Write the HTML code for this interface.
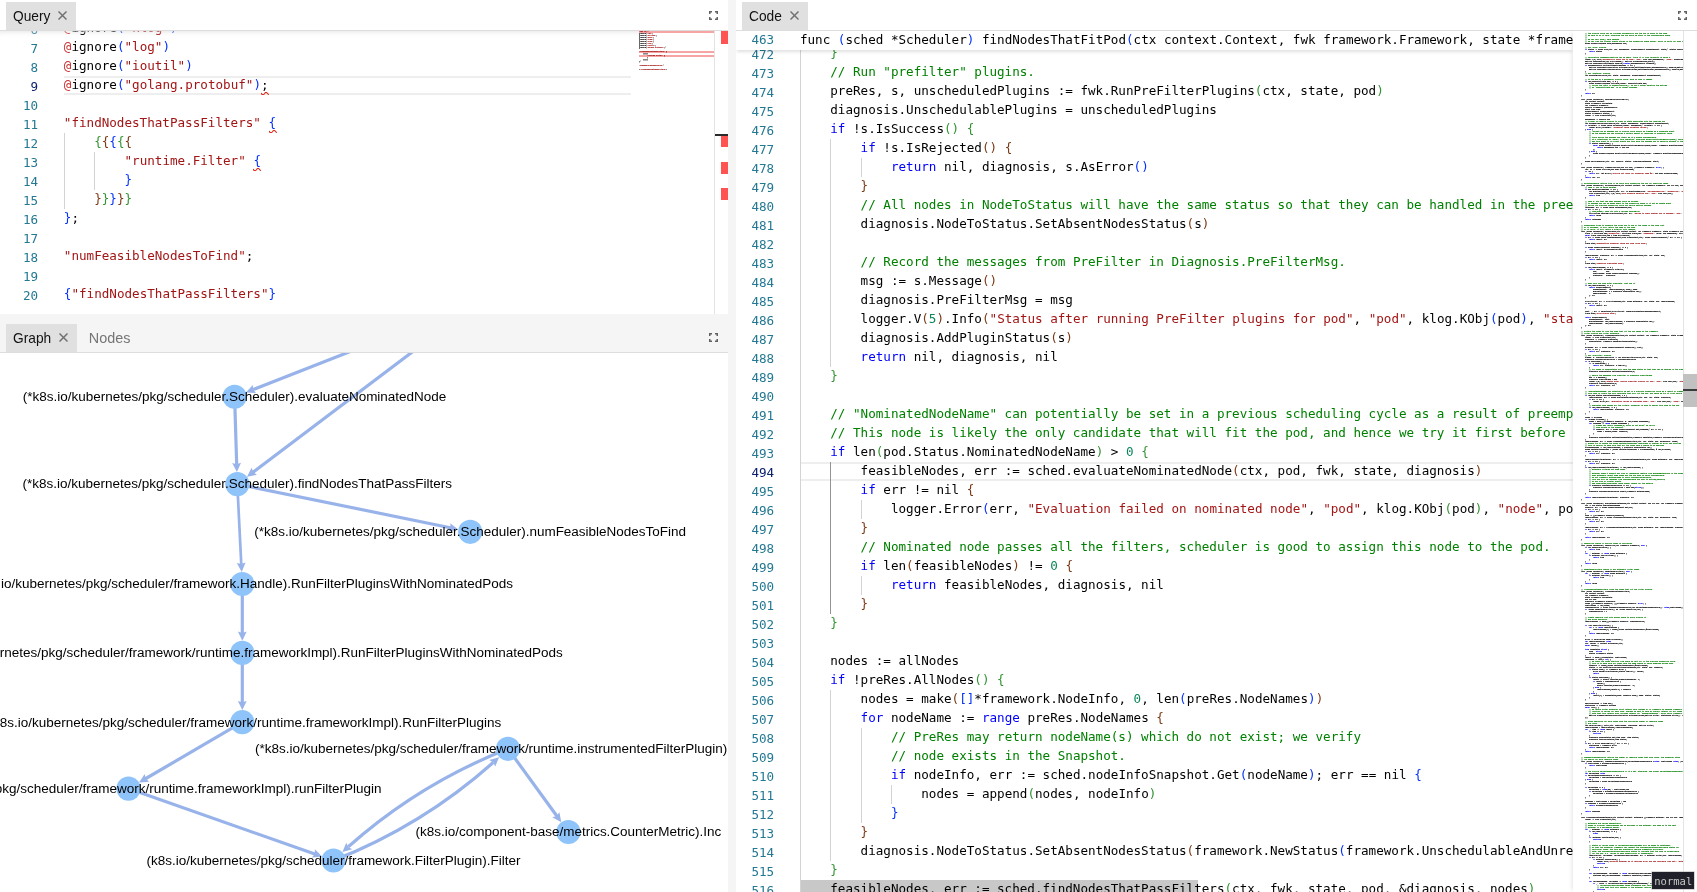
<!DOCTYPE html>
<html lang="en"><head><meta charset="utf-8"><title>Query / Graph / Code</title>
<style>
*{box-sizing:border-box;margin:0;padding:0}
html,body{width:1697px;height:892px;overflow:hidden;background:#f5f5f5;font-family:"Liberation Sans",Arial,sans-serif}
.abs{position:absolute}
#left{will-change:transform;position:absolute;left:0;top:0;width:728px;height:892px;overflow:hidden}
#right{will-change:transform;position:absolute;left:736px;top:0;width:961px;height:892px;overflow:hidden;background:#fff}
.hdr{position:absolute;left:0;top:0;width:100%;height:31px;background:#fff;z-index:5;border-bottom:1px solid #ddd}
.sd{position:absolute;left:0;top:0;width:100%;height:6px;box-shadow:#ddd 0 6px 6px -6px inset;z-index:3}
.tab{position:absolute;top:2px;height:28px;background:#e0e0e0;font-size:14.4px;line-height:26px;padding-top:.5px;color:#111;padding-left:7.3px;white-space:nowrap}
.tab span{display:inline-block;transform:scaleX(.955);transform-origin:0 50%}
.tab.in{background:none;color:#757575}
.ed{position:absolute;background:#fff;overflow:hidden;font-family:"DejaVu Sans Mono","Liberation Mono",monospace;font-size:12.6px;line-height:19px;color:#000}
.ln{position:absolute;left:0;padding-top:1px;text-align:right;color:#237893;height:19px;white-space:pre}
.ln.a{color:#0b216f}
.cl{position:absolute;white-space:pre;height:19px;margin-top:-1px}
.c{color:#008000}.s{color:#a31515}.k{color:#0000ff}.n{color:#098658}.iv{color:#cd3131}
.g{position:absolute;width:1px;background:#d3d3d3}
.g.ga{background:#939393}
.mm{position:absolute;margin:0;font:12.6px/11px "DejaVu Sans Mono","Liberation Mono",monospace;color:#000;transform-origin:0 0;transform:scale(.13184,.181818);white-space:pre;-webkit-text-stroke:.75px;width:774px;overflow:hidden}
.mm i{font-style:normal;color:#008000}.mm s{text-decoration:none;color:#a31515}.mm b{font-weight:normal;color:#0000ff}
.cur{position:absolute;height:19px;border:2px solid #eee;border-left:none;border-right:none}
</style></head>
<body>
<div id="left">
<div class="hdr"><div class="tab" style="left:6px;width:70px"><span>Query</span><svg class="abs" style="left:52px;top:9px" width="9" height="9" viewBox="0 0 9 9"><path d="M0.5 0.5L8.5 8.5M8.5 0.5L0.5 8.5" stroke="#707070" stroke-width="1.45" fill="none"/></svg></div><svg class="abs" style="left:709px;top:11px" width="9" height="9" viewBox="0 0 9 9"><path d="M0.75 3V0.75H3M6 0.75H8.25V3M8.25 6V8.25H6M3 8.25H0.75V6" fill="none" stroke="#616161" stroke-width="1.5"/></svg></div>
<div class="ed" style="left:0;top:31px;width:728px;height:283px">
<div class="cur" style="left:64px;top:45px;width:567px"></div>
<div class="g" style="left:63.5px;top:102px;height:76px"></div>
<div class="g" style="left:93.8px;top:121px;height:38px"></div>
<div class="ln" style="top:-12px;width:38.2px">6</div>
<div class="cl" style="top:-12px;left:63.80px"><span class="iv">@</span>ignore<span style="color:#0431fa">(</span><span class="s">"klog"</span><span style="color:#0431fa">)</span></div>
<div class="ln" style="top:7px;width:38.2px">7</div>
<div class="cl" style="top:7px;left:63.80px"><span class="iv">@</span>ignore<span style="color:#0431fa">(</span><span class="s">"log"</span><span style="color:#0431fa">)</span></div>
<div class="ln" style="top:26px;width:38.2px">8</div>
<div class="cl" style="top:26px;left:63.80px"><span class="iv">@</span>ignore<span style="color:#0431fa">(</span><span class="s">"ioutil"</span><span style="color:#0431fa">)</span></div>
<div class="ln a" style="top:45px;width:38.2px">9</div>
<div class="cl" style="top:45px;left:63.80px"><span class="iv">@</span>ignore<span style="color:#0431fa">(</span><span class="s">"golang.protobuf"</span><span style="color:#0431fa">)</span>;</div>
<div class="ln" style="top:64px;width:38.2px">10</div>
<div class="ln" style="top:83px;width:38.2px">11</div>
<div class="cl" style="top:83px;left:63.80px"><span class="s">"findNodesThatPassFilters"</span> <span style="color:#0431fa">{</span></div>
<div class="ln" style="top:102px;width:38.2px">12</div>
<div class="cl" style="top:102px;left:94.14px"><span style="color:#319331">{</span><span style="color:#7b3814">{</span><span style="color:#0431fa">{</span><span style="color:#319331">{</span><span style="color:#7b3814">{</span></div>
<div class="ln" style="top:121px;width:38.2px">13</div>
<div class="cl" style="top:121px;left:124.48px"><span class="s">"runtime.Filter"</span> <span style="color:#0431fa">{</span></div>
<div class="ln" style="top:140px;width:38.2px">14</div>
<div class="cl" style="top:140px;left:124.48px"><span style="color:#0431fa">}</span></div>
<div class="ln" style="top:159px;width:38.2px">15</div>
<div class="cl" style="top:159px;left:94.14px"><span style="color:#7b3814">}</span><span style="color:#319331">}</span><span style="color:#0431fa">}</span><span style="color:#7b3814">}</span><span style="color:#319331">}</span></div>
<div class="ln" style="top:178px;width:38.2px">16</div>
<div class="cl" style="top:178px;left:63.80px"><span style="color:#0431fa">}</span>;</div>
<div class="ln" style="top:197px;width:38.2px">17</div>
<div class="ln" style="top:216px;width:38.2px">18</div>
<div class="cl" style="top:216px;left:63.80px"><span class="s">"numFeasibleNodesToFind"</span>;</div>
<div class="ln" style="top:235px;width:38.2px">19</div>
<div class="ln" style="top:254px;width:38.2px">20</div>
<div class="cl" style="top:254px;left:63.80px"><span style="color:#0431fa">{</span><span class="s">"findNodesThatPassFilters"</span><span style="color:#0431fa">}</span></div>
<svg class="abs" style="left:261.0px;top:61px" width="8.4" height="3" viewBox="0 0 8.4 3"><path d="M0.2 0.9Q0.6 2.6 1.8 2.6Q3 2.6 3.7 1.4Q4.4 0.3 5 0.3Q5.8 0.4 6.6 1.6L7.9 2.7" fill="none" stroke="#dd2a1a" stroke-width="1.05"/></svg>
<svg class="abs" style="left:268.6px;top:99px" width="8.4" height="3" viewBox="0 0 8.4 3"><path d="M0.2 0.9Q0.6 2.6 1.8 2.6Q3 2.6 3.7 1.4Q4.4 0.3 5 0.3Q5.8 0.4 6.6 1.6L7.9 2.7" fill="none" stroke="#dd2a1a" stroke-width="1.05"/></svg>
<svg class="abs" style="left:253.4px;top:137px" width="8.4" height="3" viewBox="0 0 8.4 3"><path d="M0.2 0.9Q0.6 2.6 1.8 2.6Q3 2.6 3.7 1.4Q4.4 0.3 5 0.3Q5.8 0.4 6.6 1.6L7.9 2.7" fill="none" stroke="#dd2a1a" stroke-width="1.05"/></svg>
<div class="sd" style="width:639px"></div>
<div class="abs" style="left:639px;top:0px;width:75px;height:2px;background:#f6a4a4"></div>
<div class="abs" style="left:639px;top:20px;width:75px;height:2px;background:#f6a4a4"></div>
<div class="abs" style="left:639px;top:24px;width:75px;height:2px;background:#f6a4a4"></div>
<pre class="mm" style="left:639px;top:-.7px;width:560px"><s>"k8s.io/"</s>;
@ignore(<s>"fmt"</s>)
@ignore(<s>"strings"</s>)
@ignore(<s>"sync"</s>)
@ignore(<s>"time"</s>)
@ignore(<s>"klog"</s>)
@ignore(<s>"log"</s>)
@ignore(<s>"ioutil"</s>)
@ignore(<s>"golang.protobuf"</s>);

<s>"findNodesThatPassFilters"</s> {
    {{{{{
        <s>"runtime.Filter"</s> {
        }
    }}}}}
};

<s>"numFeasibleNodesToFind"</s>;

{<s>"findNodesThatPassFilters"</s>}</pre>
<div class="abs" style="left:714px;top:0;width:14px;height:283px;border-left:1px solid #e4e4e4"></div>
<div class="abs" style="left:721px;top:0px;width:7px;height:13px;background:#ff5252"></div>
<div class="abs" style="left:721px;top:105px;width:7px;height:11px;background:#ff5252"></div>
<div class="abs" style="left:721px;top:131px;width:7px;height:12px;background:#ff5252"></div>
<div class="abs" style="left:721px;top:157px;width:7px;height:12px;background:#ff5252"></div>
<div class="abs" style="left:715px;top:103px;width:13px;height:2px;background:#2a2a2a"></div>
</div>
<div class="abs" style="left:0;top:322px;width:728px;height:31px;border-bottom:1px solid #ddd"><div class="tab" style="left:6px;width:71px"><span>Graph</span><svg class="abs" style="left:52.7px;top:9px" width="9" height="9" viewBox="0 0 9 9"><path d="M0.5 0.5L8.5 8.5M8.5 0.5L0.5 8.5" stroke="#707070" stroke-width="1.45" fill="none"/></svg></div><div class="tab in" style="left:81.5px"><span style="transform:none">Nodes</span></div><svg class="abs" style="left:709px;top:11px" width="9" height="9" viewBox="0 0 9 9"><path d="M0.75 3V0.75H3M6 0.75H8.25V3M8.25 6V8.25H6M3 8.25H0.75V6" fill="none" stroke="#616161" stroke-width="1.5"/></svg></div>
<div class="abs" style="left:0;top:353px;width:728px;height:539px;background:#fff;overflow:hidden"><svg class="abs" style="left:0;top:0" width="728" height="539" viewBox="0 353 728 539">
<g fill="none" stroke="#98b3ea" stroke-width="3.2"><path d="M480.3 300.6L252.4 389.8"/><path d="M480.3 300.6L252.5 472.6"/><path d="M234.6 396.8L236.7 465.0"/><path d="M237.3 484.1L451.5 528.0"/><path d="M237.3 484.1L241.3 564.9" stroke-width="2.7"/><path d="M242.3 584.0L242.3 633.8"/><path d="M242.3 652.9L242.3 703.1"/><path d="M242.3 722.2L145.0 779.0"/><path d="M128.5 788.6L315.5 854.2"/><path d="M508.0 748.8L557.2 816.5"/><path d="M508.0 748.8Q419.1 783.7 348.3 846.8"/><path d="M333.5 860.5Q422.4 825.6 493.2 762.5"/></g>
<g fill="#98b3ea"><path d="M245.9 392.4L252.8 384.9L253.1 389.5L256.0 393.1Z"/><path d="M247.0 476.8L251.6 467.8L253.2 472.1L256.9 474.8Z"/><path d="M236.9 472.0L232.2 462.9L236.7 464.2L241.0 462.7Z"/><path d="M458.3 529.4L448.5 531.8L450.7 527.8L450.2 523.2Z"/><path d="M241.7 571.9L236.8 562.9L241.3 564.1L245.6 562.5Z"/><path d="M242.3 640.8L237.9 631.6L242.3 633.0L246.7 631.6Z"/><path d="M242.3 710.1L237.9 700.9L242.3 702.3L246.7 700.9Z"/><path d="M139.0 782.5L144.7 774.1L145.7 778.6L149.1 781.7Z"/><path d="M322.1 856.5L311.9 857.6L314.7 853.9L314.9 849.3Z"/><path d="M561.3 822.2L552.3 817.3L556.7 815.9L559.4 812.2Z"/><path d="M342.4 852.1L346.3 842.7L348.2 846.9L352.2 849.2Z"/><path d="M499.1 757.2L495.2 766.6L493.3 762.4L489.3 760.1Z"/></g>
<g fill="#8fc4fb"><circle cx="480.3" cy="300.6" r="12.1"/><circle cx="234.6" cy="396.8" r="12.1"/><circle cx="237.3" cy="484.1" r="12.1"/><circle cx="470.2" cy="531.8" r="12.1"/><circle cx="242.3" cy="584" r="12.1"/><circle cx="242.3" cy="652.9" r="12.1"/><circle cx="242.3" cy="722.2" r="12.1"/><circle cx="128.5" cy="788.6" r="12.1"/><circle cx="508" cy="748.8" r="12.1"/><circle cx="568.4" cy="832" r="12.1"/><circle cx="333.5" cy="860.5" r="12.1"/></g>
<g font-family="'Liberation Sans', Arial, sans-serif" font-size="13.49" fill="#000" text-anchor="middle">
<text x="234.6" y="401.1">(*k8s.io/kubernetes/pkg/scheduler.Scheduler).evaluateNominatedNode</text>
<text x="237.3" y="488.4">(*k8s.io/kubernetes/pkg/scheduler.Scheduler).findNodesThatPassFilters</text>
<text x="470.2" y="536.1">(*k8s.io/kubernetes/pkg/scheduler.Scheduler).numFeasibleNodesToFind</text>
<text x="242.3" y="588.3">(k8s.io/kubernetes/pkg/scheduler/framework.Handle).RunFilterPluginsWithNominatedPods</text>
<text x="242.3" y="657.2">(*k8s.io/kubernetes/pkg/scheduler/framework/runtime.frameworkImpl).RunFilterPluginsWithNominatedPods</text>
<text x="242.3" y="726.5">(*k8s.io/kubernetes/pkg/scheduler/framework/runtime.frameworkImpl).RunFilterPlugins</text>
<text x="128.5" y="792.9">(*k8s.io/kubernetes/pkg/scheduler/framework/runtime.frameworkImpl).runFilterPlugin</text>
<text x="508" y="753.1">(*k8s.io/kubernetes/pkg/scheduler/framework/runtime.instrumentedFilterPlugin).Filter</text>
<text x="568.4" y="836.3">(k8s.io/component-base/metrics.CounterMetric).Inc</text>
<text x="333.5" y="864.8">(k8s.io/kubernetes/pkg/scheduler/framework.FilterPlugin).Filter</text>
</g></svg></div>
</div>
<div id="right">
<div class="hdr"><div class="tab" style="left:6px;width:66px"><span>Code</span><svg class="abs" style="left:48px;top:9px" width="9" height="9" viewBox="0 0 9 9"><path d="M0.5 0.5L8.5 8.5M8.5 0.5L0.5 8.5" stroke="#707070" stroke-width="1.45" fill="none"/></svg></div><svg class="abs" style="left:941.5px;top:11px" width="9" height="9" viewBox="0 0 9 9"><path d="M0.75 3V0.75H3M6 0.75H8.25V3M8.25 6V8.25H6M3 8.25H0.75V6" fill="none" stroke="#616161" stroke-width="1.5"/></svg></div>
<div class="ed" style="left:0;top:31px;width:961px;height:861px">
<div class="abs" style="left:0;top:0;width:837px;height:861px;overflow:hidden">
<div class="abs" style="left:64.0px;top:849px;width:398px;height:19px;background:#c8c8c8"></div>
<div class="cur" style="left:65.0px;top:431px;width:900px"></div>
<div class="g" style="left:64.00px;top:13px;height:855px"></div>
<div class="g" style="left:94.34px;top:108px;height:228px"></div>
<div class="g" style="left:94.34px;top:659px;height:171px"></div>
<div class="g ga" style="left:94.34px;top:431px;height:152px"></div>
<div class="g" style="left:124.68px;top:127px;height:19px"></div>
<div class="g" style="left:124.68px;top:469px;height:19px"></div>
<div class="g" style="left:124.68px;top:545px;height:19px"></div>
<div class="g" style="left:124.68px;top:697px;height:95px"></div>
<div class="g" style="left:155.02px;top:754px;height:19px"></div>
<div class="ln" style="top:13px;width:38.2px">472</div>
<div class="cl" style="top:13px;left:94.24px"><span style="color:#319331">}</span></div>
<div class="ln" style="top:32px;width:38.2px">473</div>
<div class="cl" style="top:32px;left:94.24px"><span class="c">// Run "prefilter" plugins.</span></div>
<div class="ln" style="top:51px;width:38.2px">474</div>
<div class="cl" style="top:51px;left:94.24px">preRes, s, unscheduledPlugins := fwk.RunPreFilterPlugins<span style="color:#319331">(</span>ctx, state, pod<span style="color:#319331">)</span></div>
<div class="ln" style="top:70px;width:38.2px">475</div>
<div class="cl" style="top:70px;left:94.24px">diagnosis.UnschedulablePlugins = unscheduledPlugins</div>
<div class="ln" style="top:89px;width:38.2px">476</div>
<div class="cl" style="top:89px;left:94.24px"><span class="k">if</span> !s.IsSuccess<span style="color:#319331">(</span><span style="color:#319331">)</span> <span style="color:#319331">{</span></div>
<div class="ln" style="top:108px;width:38.2px">477</div>
<div class="cl" style="top:108px;left:124.58px"><span class="k">if</span> !s.IsRejected<span style="color:#7b3814">(</span><span style="color:#7b3814">)</span> <span style="color:#7b3814">{</span></div>
<div class="ln" style="top:127px;width:38.2px">478</div>
<div class="cl" style="top:127px;left:154.92px"><span class="k">return</span> nil, diagnosis, s.AsError<span style="color:#0431fa">(</span><span style="color:#0431fa">)</span></div>
<div class="ln" style="top:146px;width:38.2px">479</div>
<div class="cl" style="top:146px;left:124.58px"><span style="color:#7b3814">}</span></div>
<div class="ln" style="top:165px;width:38.2px">480</div>
<div class="cl" style="top:165px;left:124.58px"><span class="c">// All nodes in NodeToStatus will have the same status so that they can be handled in the preemption.</span></div>
<div class="ln" style="top:184px;width:38.2px">481</div>
<div class="cl" style="top:184px;left:124.58px">diagnosis.NodeToStatus.SetAbsentNodesStatus<span style="color:#7b3814">(</span>s<span style="color:#7b3814">)</span></div>
<div class="ln" style="top:203px;width:38.2px">482</div>
<div class="ln" style="top:222px;width:38.2px">483</div>
<div class="cl" style="top:222px;left:124.58px"><span class="c">// Record the messages from PreFilter in Diagnosis.PreFilterMsg.</span></div>
<div class="ln" style="top:241px;width:38.2px">484</div>
<div class="cl" style="top:241px;left:124.58px">msg := s.Message<span style="color:#7b3814">(</span><span style="color:#7b3814">)</span></div>
<div class="ln" style="top:260px;width:38.2px">485</div>
<div class="cl" style="top:260px;left:124.58px">diagnosis.PreFilterMsg = msg</div>
<div class="ln" style="top:279px;width:38.2px">486</div>
<div class="cl" style="top:279px;left:124.58px">logger.V<span style="color:#7b3814">(</span><span class="n">5</span><span style="color:#7b3814">)</span>.Info<span style="color:#7b3814">(</span><span class="s">"Status after running PreFilter plugins for pod"</span>, <span class="s">"pod"</span>, klog.KObj<span style="color:#0431fa">(</span>pod<span style="color:#0431fa">)</span>, <span class="s">"status"</span>, msg<span style="color:#7b3814">)</span></div>
<div class="ln" style="top:298px;width:38.2px">487</div>
<div class="cl" style="top:298px;left:124.58px">diagnosis.AddPluginStatus<span style="color:#7b3814">(</span>s<span style="color:#7b3814">)</span></div>
<div class="ln" style="top:317px;width:38.2px">488</div>
<div class="cl" style="top:317px;left:124.58px"><span class="k">return</span> nil, diagnosis, nil</div>
<div class="ln" style="top:336px;width:38.2px">489</div>
<div class="cl" style="top:336px;left:94.24px"><span style="color:#319331">}</span></div>
<div class="ln" style="top:355px;width:38.2px">490</div>
<div class="ln" style="top:374px;width:38.2px">491</div>
<div class="cl" style="top:374px;left:94.24px"><span class="c">// "NominatedNodeName" can potentially be set in a previous scheduling cycle as a result of preemption.</span></div>
<div class="ln" style="top:393px;width:38.2px">492</div>
<div class="cl" style="top:393px;left:94.24px"><span class="c">// This node is likely the only candidate that will fit the pod, and hence we try it first before iterating over all nodes.</span></div>
<div class="ln" style="top:412px;width:38.2px">493</div>
<div class="cl" style="top:412px;left:94.24px"><span class="k">if</span> len<span style="color:#319331">(</span>pod.Status.NominatedNodeName<span style="color:#319331">)</span> &gt; <span class="n">0</span> <span style="color:#319331">{</span></div>
<div class="ln a" style="top:431px;width:38.2px">494</div>
<div class="cl" style="top:431px;left:124.58px">feasibleNodes, err := sched.evaluateNominatedNode<span style="color:#7b3814">(</span>ctx, pod, fwk, state, diagnosis<span style="color:#7b3814">)</span></div>
<div class="ln" style="top:450px;width:38.2px">495</div>
<div class="cl" style="top:450px;left:124.58px"><span class="k">if</span> err != nil <span style="color:#7b3814">{</span></div>
<div class="ln" style="top:469px;width:38.2px">496</div>
<div class="cl" style="top:469px;left:154.92px">logger.Error<span style="color:#0431fa">(</span>err, <span class="s">"Evaluation failed on nominated node"</span>, <span class="s">"pod"</span>, klog.KObj<span style="color:#319331">(</span>pod<span style="color:#319331">)</span>, <span class="s">"node"</span>, pod.Status.NominatedNodeName<span style="color:#0431fa">)</span></div>
<div class="ln" style="top:488px;width:38.2px">497</div>
<div class="cl" style="top:488px;left:124.58px"><span style="color:#7b3814">}</span></div>
<div class="ln" style="top:507px;width:38.2px">498</div>
<div class="cl" style="top:507px;left:124.58px"><span class="c">// Nominated node passes all the filters, scheduler is good to assign this node to the pod.</span></div>
<div class="ln" style="top:526px;width:38.2px">499</div>
<div class="cl" style="top:526px;left:124.58px"><span class="k">if</span> len<span style="color:#7b3814">(</span>feasibleNodes<span style="color:#7b3814">)</span> != <span class="n">0</span> <span style="color:#7b3814">{</span></div>
<div class="ln" style="top:545px;width:38.2px">500</div>
<div class="cl" style="top:545px;left:154.92px"><span class="k">return</span> feasibleNodes, diagnosis, nil</div>
<div class="ln" style="top:564px;width:38.2px">501</div>
<div class="cl" style="top:564px;left:124.58px"><span style="color:#7b3814">}</span></div>
<div class="ln" style="top:583px;width:38.2px">502</div>
<div class="cl" style="top:583px;left:94.24px"><span style="color:#319331">}</span></div>
<div class="ln" style="top:602px;width:38.2px">503</div>
<div class="ln" style="top:621px;width:38.2px">504</div>
<div class="cl" style="top:621px;left:94.24px">nodes := allNodes</div>
<div class="ln" style="top:640px;width:38.2px">505</div>
<div class="cl" style="top:640px;left:94.24px"><span class="k">if</span> !preRes.AllNodes<span style="color:#319331">(</span><span style="color:#319331">)</span> <span style="color:#319331">{</span></div>
<div class="ln" style="top:659px;width:38.2px">506</div>
<div class="cl" style="top:659px;left:124.58px">nodes = make<span style="color:#7b3814">(</span><span style="color:#0431fa">[</span><span style="color:#0431fa">]</span>*framework.NodeInfo, <span class="n">0</span>, len<span style="color:#0431fa">(</span>preRes.NodeNames<span style="color:#0431fa">)</span><span style="color:#7b3814">)</span></div>
<div class="ln" style="top:678px;width:38.2px">507</div>
<div class="cl" style="top:678px;left:124.58px"><span class="k">for</span> nodeName := <span class="k">range</span> preRes.NodeNames <span style="color:#7b3814">{</span></div>
<div class="ln" style="top:697px;width:38.2px">508</div>
<div class="cl" style="top:697px;left:154.92px"><span class="c">// PreRes may return nodeName(s) which do not exist; we verify</span></div>
<div class="ln" style="top:716px;width:38.2px">509</div>
<div class="cl" style="top:716px;left:154.92px"><span class="c">// node exists in the Snapshot.</span></div>
<div class="ln" style="top:735px;width:38.2px">510</div>
<div class="cl" style="top:735px;left:154.92px"><span class="k">if</span> nodeInfo, err := sched.nodeInfoSnapshot.Get<span style="color:#0431fa">(</span>nodeName<span style="color:#0431fa">)</span>; err == nil <span style="color:#0431fa">{</span></div>
<div class="ln" style="top:754px;width:38.2px">511</div>
<div class="cl" style="top:754px;left:185.26px">nodes = append<span style="color:#319331">(</span>nodes, nodeInfo<span style="color:#319331">)</span></div>
<div class="ln" style="top:773px;width:38.2px">512</div>
<div class="cl" style="top:773px;left:154.92px"><span style="color:#0431fa">}</span></div>
<div class="ln" style="top:792px;width:38.2px">513</div>
<div class="cl" style="top:792px;left:124.58px"><span style="color:#7b3814">}</span></div>
<div class="ln" style="top:811px;width:38.2px">514</div>
<div class="cl" style="top:811px;left:124.58px">diagnosis.NodeToStatus.SetAbsentNodesStatus<span style="color:#7b3814">(</span>framework.NewStatus<span style="color:#0431fa">(</span>framework.UnschedulableAndUnresolvable, <span class="s">"node(s) didn't satisfy plugin(s) Pre"</span><span style="color:#0431fa">)</span><span style="color:#7b3814">)</span></div>
<div class="ln" style="top:830px;width:38.2px">515</div>
<div class="cl" style="top:830px;left:94.24px"><span style="color:#319331">}</span></div>
<div class="ln" style="top:849px;width:38.2px">516</div>
<div class="cl" style="top:849px;left:94.24px">feasibleNodes, err := sched.findNodesThatPassFilters<span style="color:#319331">(</span>ctx, fwk, state, pod, &amp;diagnosis, nodes<span style="color:#319331">)</span></div>
<div class="abs" style="left:0;top:0;width:100%;height:19px;background:#fff;box-shadow:0 3px 3px -1px rgba(0,0,0,.12)">
<div class="ln" style="top:-2px;width:38.2px">463</div><div class="cl" style="top:0;left:63.90px">func <span style="color:#0431fa">(</span>sched *Scheduler<span style="color:#0431fa">)</span> findNodesThatFitPod<span style="color:#0431fa">(</span>ctx context.Context, fwk framework.Framework, state *framework.CycleState, pod *v1.Pod<span style="color:#0431fa">)</span> <span style="color:#0431fa">(</span><span style="color:#319331">[</span><span style="color:#319331">]</span>*framework.NodeInfo, framework.Diagnosis, <span class="k">error</span><span style="color:#0431fa">)</span> <span style="color:#0431fa">{</span></div>
</div>
</div>
<div class="abs" style="left:837px;top:0;width:124px;height:861px;background:#fff;box-shadow:-3px 0 4px -2px rgba(0,0,0,.11)"></div>
<pre class="mm" style="left:845px;top:-.7px">

    <i>// the binding cycle can be finished successfully and the pod is bound to the node.</i>
    <i>// We have to do it here, otherwise the pod would be stuck in the unschedulable queue.</i>
    <i>//</i>
    <i>// We can call Done() here because</i>
    <i>// we can free the cluster events stored in the scheduling queue sooner, which is worth for busy c</i>
    sched.SchedulingQueue.Done(assumedPod.UID)

    <i>// Run "bind" plugins.</i>
    <b>if</b> status := sched.bind(ctx, fwk, assumedPod, scheduleResult.SuggestedHost, state); !status.IsSucc
        <b>return</b> status
    }

    <i>// Calculating nodeResourceString can be heavy. Avoid it if klog verbosity is below 2.</i>
    logger.V(2).Info(<s>"Successfully bound pod to node"</s>, <s>"pod"</s>, klog.KObj(assumedPod), <s>"node"</s>, scheduleR
    metrics.PodScheduled(fwk.ProfileName(), metrics.SinceInSeconds(start))
    metrics.PodSchedulingAttempts.Observe(<b>float64</b>(assumedPodInfo.Attempts))
    <b>if</b> assumedPodInfo.InitialAttemptTimestamp != nil {
        metrics.PodSchedulingDuration.WithLabelValues(getAttemptsLabel(assumedPodInfo)).Observe(metric
        metrics.PodSchedulingSLIDuration.WithLabelValues(getAttemptsLabel(assumedPodInfo)).Observe(met
    }
    <i>// Run "postbind" plugins.</i>
    fwk.RunPostBindPlugins(ctx, state, assumedPod, scheduleResult.SuggestedHost)

    <i>// At the end of a successful binding cycle, move up Pods if needed.</i>
    <b>if</b> len(podsToActivate.Map) != 0 {
        sched.SchedulingQueue.Activate(logger, podsToActivate.Map)
        <i>// Unlike the logic in schedulingCycle(), we don't bother deleting the entries</i>
        <i>// as `podsToActivate.Map` is no longer consumed.</i>
    }

    <b>return</b> nil
}

func (sched *Scheduler) handleBindingCycleError(
    ctx context.Context,
    state *framework.CycleState,
    fwk framework.Framework,
    podInfo *framework.QueuedPodInfo,
    start time.Time,
    scheduleResult ScheduleResult,
    status *framework.Status) {
    logger := klog.FromContext(ctx)

    assumedPod := podInfo.Pod
    <i>// trigger un-reserve plugins to clean up state associated with the reserved Pod</i>
    fwk.RunReservePluginsUnreserve(ctx, state, assumedPod, scheduleResult.SuggestedHost)
    <b>if</b> forgetErr := sched.Cache.ForgetPod(logger, assumedPod); forgetErr != nil {
        logger.Error(forgetErr, <s>"scheduler cache ForgetPod failed"</s>)
    } <b>else</b> {
        <i>// "Forget"ing an assumed Pod in binding cycle should be treated as a PodDelete event,</i>
        <i>// as the assumed Pod had occupied a certain amount of resources in scheduler cache.</i>
        <i>//</i>
        <i>// Avoid moving the assumed Pod itself as it's always Unschedulable.</i>
        <i>// It's intentional to "defer" this operation; otherwise MoveAllToActiveOrBackoffQueue() would</i>
        <i>// add this event to in-flight events and thus move the assumed pod to backoffQ anyways if the</i>
        <b>if</b> status.IsRejected() {
            <b>defer</b> sched.SchedulingQueue.MoveAllToActiveOrBackoffQueue(logger, framework.EventAssignedP
                <b>return</b> assumedPod.UID != pod.UID
            })
        } <b>else</b> {
            sched.SchedulingQueue.MoveAllToActiveOrBackoffQueue(logger, framework.EventAssignedPodDele
        }
    }

    sched.FailureHandler(ctx, fwk, podInfo, status, clearNominatedNode, start)
}

func (sched *Scheduler) frameworkForPod(pod *v1.Pod) (framework.Framework, <b>error</b>) {
    fwk, ok := sched.Profiles[pod.Spec.SchedulerName]
    <b>if</b> !ok {
        <b>return</b> nil, fmt.Errorf(<s>"profile not found for scheduler name %q"</s>, pod.Spec.SchedulerName)
    }
    <b>return</b> fwk, nil
}

<i>// skipPodSchedule returns true if we could skip scheduling the pod for specified cases.</i>
func (sched *Scheduler) skipPodSchedule(ctx context.Context, fwk framework.Framework, pod *v1.Pod) boo
    <i>// Case 1: pod is being deleted.</i>
    <b>if</b> pod.DeletionTimestamp != nil {
        fwk.EventRecorder().Eventf(pod, nil, v1.EventTypeWarning, <s>"FailedScheduling"</s>, <s>"Scheduling"</s>, <s>"s</s>
        klog.FromContext(ctx).V(3).Info(<s>"Skip schedule deleting pod"</s>, <s>"pod"</s>, klog.KObj(pod))
        <b>return</b> true
    }

    <i>// Case 2: pod that has been assumed could be skipped.</i>
    <i>// An assumed pod can be added again to the scheduling queue if it got an update event</i>
    <i>// during its previous scheduling cycle but before getting assumed.</i>
    isAssumed, err := sched.Cache.IsAssumedPod(pod)
    <b>if</b> err != nil {
        <i>// TODO(91633): pass ctx into a revised HandleError</i>
        utilruntime.HandleErrorWithContext(ctx, err, <s>"Failed to check whether pod is assumed"</s>, <s>"pod"</s>, 
        <b>return</b> false
    }
    <b>return</b> isAssumed
}

<i>// schedulePod tries to schedule the given pod to one of the nodes in the node list.</i>
<i>// If it succeeds, it will return the name of the node.</i>
<i>// If it fails, it will return a FitError with reasons.</i>
func (sched *Scheduler) schedulePod(ctx context.Context, fwk framework.Framework, state *framework.Cyc
    trace := utiltrace.New(<s>"Scheduling"</s>, utiltrace.Field{Key: <s>"namespace"</s>, Value: pod.Namespace}, util
    <b>defer</b> trace.LogIfLong(100 * time.Millisecond)
    <b>if</b> err := sched.Cache.UpdateSnapshot(klog.FromContext(ctx), sched.nodeInfoSnapshot); err != nil {
        <b>return</b> result, err
    }
    trace.Step(<s>"Snapshotting scheduler cache and node infos done"</s>)

    <b>if</b> sched.nodeInfoSnapshot.NumNodes() == 0 {
        <b>return</b> result, ErrNoNodesAvailable
    }

    feasibleNodes, diagnosis, err := sched.findNodesThatFitPod(ctx, fwk, state, pod)
    <b>if</b> err != nil {
        <b>return</b> result, err
    }
    trace.Step(<s>"Computing predicates done"</s>)

    <b>if</b> len(feasibleNodes) == 0 {
        <b>return</b> result, &amp;framework.FitError{
            Pod:         pod,
            NumAllNodes: sched.nodeInfoSnapshot.NumNodes(),
            Diagnosis:   diagnosis,
        }
    }

    <i>// When only one node after predicate, just use it.</i>
    <b>if</b> len(feasibleNodes) == 1 {
        <b>return</b> ScheduleResult{
            SuggestedHost:  feasibleNodes[0].Node().Name,
            EvaluatedNodes: 1 + diagnosis.NodeToStatus.Len(),
            FeasibleNodes:  1,
        }, nil
    }

    priorityList, err := prioritizeNodes(ctx, sched.Extenders, fwk, state, pod, feasibleNodes)
    <b>if</b> err != nil {
        <b>return</b> result, err
    }

    host, _, err := selectHost(priorityList, numberOfHighestScoredNodesToReport)
    trace.Step(<s>"Prioritizing done"</s>)

    <b>return</b> ScheduleResult{
        SuggestedHost:  host,
        EvaluatedNodes: len(feasibleNodes) + diagnosis.NodeToStatus.Len(),
        FeasibleNodes:  len(feasibleNodes),
    }, err
}

<i>// Filters the nodes to find the ones that fit the pod based on the framework</i>
<i>// filter plugins and filter extenders.</i>
func (sched *Scheduler) findNodesThatFitPod(ctx context.Context, fwk framework.Framework, state *frame
    logger := klog.FromContext(ctx)
    diagnosis := framework.Diagnosis{
        NodeToStatus: framework.NewDefaultNodeToStatus(),
    }

    allNodes, err := sched.nodeInfoSnapshot.NodeInfos().List()
    <b>if</b> err != nil {
        <b>return</b> nil, diagnosis, err
    }
    <i>// Run "prefilter" plugins.</i>
    preRes, s, unscheduledPlugins := fwk.RunPreFilterPlugins(ctx, state, pod)
    diagnosis.UnschedulablePlugins = unscheduledPlugins
    <b>if</b> !s.IsSuccess() {
        <b>if</b> !s.IsRejected() {
            <b>return</b> nil, diagnosis, s.AsError()
        }
        <i>// All nodes in NodeToStatus will have the same status so that they can be handled in the pree</i>
        diagnosis.NodeToStatus.SetAbsentNodesStatus(s)

        <i>// Record the messages from PreFilter in Diagnosis.PreFilterMsg.</i>
        msg := s.Message()
        diagnosis.PreFilterMsg = msg
        logger.V(5).Info(<s>"Status after running PreFilter plugins for pod"</s>, <s>"pod"</s>, klog.KObj(pod), <s>"sta</s>
        diagnosis.AddPluginStatus(s)
        <b>return</b> nil, diagnosis, nil
    }

    <i>// "NominatedNodeName" can potentially be set in a previous scheduling cycle as a result of preemp</i>
    <i>// This node is likely the only candidate that will fit the pod, and hence we try it first before </i>
    <b>if</b> len(pod.Status.NominatedNodeName) &gt; 0 {
        feasibleNodes, err := sched.evaluateNominatedNode(ctx, pod, fwk, state, diagnosis)
        <b>if</b> err != nil {
            logger.Error(err, <s>"Evaluation failed on nominated node"</s>, <s>"pod"</s>, klog.KObj(pod), <s>"node"</s>, po
        }
        <i>// Nominated node passes all the filters, scheduler is good to assign this node to the pod.</i>
        <b>if</b> len(feasibleNodes) != 0 {
            <b>return</b> feasibleNodes, diagnosis, nil
        }
    }

    nodes := allNodes
    <b>if</b> !preRes.AllNodes() {
        nodes = make([]*framework.NodeInfo, 0, len(preRes.NodeNames))
        <b>for</b> nodeName := <b>range</b> preRes.NodeNames {
            <i>// PreRes may return nodeName(s) which do not exist; we verify</i>
            <i>// node exists in the Snapshot.</i>
            <b>if</b> nodeInfo, err := sched.nodeInfoSnapshot.Get(nodeName); err == nil {
                nodes = append(nodes, nodeInfo)
            }
        }
        diagnosis.NodeToStatus.SetAbsentNodesStatus(framework.NewStatus(framework.UnschedulableAndUnre
    }
    feasibleNodes, err := sched.findNodesThatPassFilters(ctx, fwk, state, pod, &amp;diagnosis, nodes)
    <i>// always try to update the sched.nextStartNodeIndex regardless of whether an error has occurred</i>
    <i>// this is helpful to make sure that all the nodes have a chance to be searched</i>
    processedNodes := len(feasibleNodes) + diagnosis.NodeToStatus.Len()
    sched.nextStartNodeIndex = (sched.nextStartNodeIndex + processedNodes) % len(allNodes)
    <b>if</b> err != nil {
        <b>return</b> nil, diagnosis, err
    }

    feasibleNodesAfterExtender, err := findNodesThatPassExtenders(ctx, sched.Extenders, pod, feasibleN
    <b>if</b> err != nil {
        <b>return</b> nil, diagnosis, err
    }
    <b>if</b> len(feasibleNodesAfterExtender) != len(feasibleNodes) {
        <i>// Extenders filtered out some nodes.</i>
        <i>//</i>
        <i>// Extender doesn't support any kind of requeueing feature like EnqueueExtensions in the sched</i>
        <i>// When Extenders reject some Nodes and the pod ends up being unschedulable,</i>
        <i>// we put framework.ExtenderName to pInfo.UnschedulablePlugins.</i>
        <i>// This Pod will be requeued from unschedulable pod pool to activeQ/backoffQ</i>
        <i>// by any kind of cluster events.</i>
        <i>// see kubernetes/kubernetes issue number 122019 for the details</i>
        <b>if</b> diagnosis.UnschedulablePlugins == nil {
            diagnosis.UnschedulablePlugins = sets.New[<b>string</b>]()
        }
        diagnosis.UnschedulablePlugins.Insert(framework.ExtenderName)
    }

    <b>return</b> feasibleNodesAfterExtender, diagnosis, nil
}

func (sched *Scheduler) evaluateNominatedNode(ctx context.Context, pod *v1.Pod, fwk framework.Framewor
    nnn := pod.Status.NominatedNodeName
    nodeInfo, err := sched.nodeInfoSnapshot.Get(nnn)
    <b>if</b> err != nil {
        <b>return</b> nil, err
    }
    node := []*framework.NodeInfo{nodeInfo}
    feasibleNodes, err := sched.findNodesThatPassFilters(ctx, fwk, state, pod, &amp;diagnosis, node)
    <b>if</b> err != nil {
        <b>return</b> nil, err
    }

    feasibleNodes, err = findNodesThatPassExtenders(ctx, sched.Extenders, pod, feasibleNodes, diagnosi
    <b>if</b> err != nil {
        <b>return</b> nil, err
    }

    <b>return</b> feasibleNodes, nil
}

<i>// hasScoring checks if scoring nodes is configured.</i>
func (sched *Scheduler) hasScoring(fwk framework.Framework) <b>bool</b> {
    <b>if</b> fwk.HasScorePlugins() {
        <b>return</b> true
    }
    <b>for</b> _, extender := <b>range</b> sched.Extenders {
        <b>if</b> extender.IsPrioritizer() {
            <b>return</b> true
        }
    }
    <b>return</b> false
}

<i>// hasExtenderFilters checks if any extenders filter nodes.</i>
func (sched *Scheduler) hasExtenderFilters() <b>bool</b> {
    <b>for</b> _, extender := <b>range</b> sched.Extenders {
        <b>if</b> extender.IsFilter() {
            <b>return</b> true
        }
    }
    <b>return</b> false
}

<i>// findNodesThatPassFilters finds the nodes that fit the filter plugins.</i>
func (sched *Scheduler) findNodesThatPassFilters(
    ctx context.Context,
    fwk framework.Framework,
    state *framework.CycleState,
    pod *v1.Pod,
    diagnosis *framework.Diagnosis,
    nodes []*framework.NodeInfo) ([]*framework.NodeInfo, <b>error</b>) {
    numAllNodes := len(nodes)
    numNodesToFind := sched.numFeasibleNodesToFind(fwk.PercentageOfNodesToScore(), <b>int32</b>(numAllNodes))
    <b>if</b> !sched.hasExtenderFilters() &amp;&amp; !sched.hasScoring(fwk) {
        numNodesToFind = 1
    }

    <i>// Create feasible list with enough space to avoid growing it</i>
    <i>// and allow assigning.</i>
    feasibleNodes := make([]*framework.NodeInfo, numNodesToFind)

    <b>if</b> !fwk.HasFilterPlugins() {
        <b>for</b> i := <b>range</b> feasibleNodes {
            feasibleNodes[i] = nodes[(sched.nextStartNodeIndex+i)%numAllNodes]
        }
        <b>return</b> feasibleNodes, nil
    }

    errCh := parallelize.NewErrorChannel()
    <b>var</b> feasibleNodesLen <b>int32</b>
    ctx, cancel := context.WithCancel(ctx)
    <b>defer</b> cancel()

    <b>type</b> nodeStatus <b>struct</b> {
        node   <b>string</b>
        status *framework.Status
    }
    result := make([]*nodeStatus, numAllNodes)
    checkNode := func(i <b>int</b>) {
        <i>// We check the nodes starting from where we left off in the previous scheduling cycle,</i>
        <i>// this is to make sure all nodes have the same chance of being examined across pods.</i>
        nodeInfo := nodes[(sched.nextStartNodeIndex+i)%numAllNodes]
        status := fwk.RunFilterPluginsWithNominatedPods(ctx, state, pod, nodeInfo)
        <b>if</b> status.Code() == framework.Error {
            errCh.SendErrorWithCancel(status.AsError(), cancel)
            <b>return</b>
        }
        <b>if</b> status.IsSuccess() {
            length := atomic.AddInt32(&amp;feasibleNodesLen, 1)
            <b>if</b> length &gt; numNodesToFind {
                cancel()
                atomic.AddInt32(&amp;feasibleNodesLen, -1)
            } <b>else</b> {
                feasibleNodes[length-1] = nodeInfo
            }
        } <b>else</b> {
            result[i] = &amp;nodeStatus{node: nodeInfo.Node().Name, status: status}
        }
    }

    beginCheckNode := time.Now()
    statusCode := framework.Success
    <b>defer</b> func() {
        <i>// We record Filter extension point latency here instead of in framework.go because framework.</i>
        <i>// function is called for each node, whereas we want to have an overall latency for all nodes </i>
        <i>// Note that this latency also includes latency for `addNominatedPods`, which calls framework.</i>
        metrics.FrameworkExtensionPointDuration.WithLabelValues(metrics.Filter, statusCode.String(), f
    }()

    <i>// Stops searching for more nodes once the configured number of feasible nodes</i>
    <i>// are found.</i>
    fwk.Parallelizer().Until(ctx, numAllNodes, checkNode, metrics.Filter)
    feasibleNodes = feasibleNodes[:feasibleNodesLen]
    <b>for</b> _, item := <b>range</b> result {
        <b>if</b> item == nil {
            <b>continue</b>
        }
        diagnosis.NodeToStatus.Set(item.node, item.status)
        diagnosis.AddPluginStatus(item.status)
    }
    <b>if</b> err := errCh.ReceiveError(); err != nil {
        statusCode = framework.Error
        <b>return</b> feasibleNodes, err
    }
    <b>return</b> feasibleNodes, nil
}

<i>// numFeasibleNodesToFind returns the number of feasible nodes that once found, the scheduler stops</i>
<i>// its search for more feasible nodes.</i>
func (sched *Scheduler) numFeasibleNodesToFind(percentageOfNodesToScore *<b>int32</b>, numAllNodes <b>int32</b>) (nu
    <b>if</b> numAllNodes &lt; minFeasibleNodesToFind {
        <b>return</b> numAllNodes
    }

    <i>// Use profile percentageOfNodesToScore if it's set. Otherwise, use global percentageOfNodesToScor</i>
    <b>var</b> percentage <b>int32</b>
    <b>if</b> percentageOfNodesToScore != nil {
        percentage = *percentageOfNodesToScore
    } <b>else</b> {
        percentage = sched.percentageOfNodesToScore
    }

    <b>if</b> percentage == 0 {
        percentage = <b>int32</b>(50) - numAllNodes/125
        <b>if</b> percentage &lt; minFeasibleNodesPercentageToFind {
            percentage = minFeasibleNodesPercentageToFind
        }
    }

    numNodes = numAllNodes * percentage / 100
    <b>if</b> numNodes &lt; minFeasibleNodesToFind {
        <b>return</b> minFeasibleNodesToFind
    }

    <b>return</b> numNodes
}

func findNodesThatPassExtenders(ctx context.Context, extenders []framework.Extender, pod *v1.Pod, feas
    logger := klog.FromContext(ctx)

    <i>// Extenders are called sequentially.</i>
    <i>// Nodes in original feasibleNodes can be excluded in one extender, and pass on to the next</i>
    <i>// extender in a decreasing manner.</i>
    <b>for</b> _, extender := <b>range</b> extenders {
        <b>if</b> len(feasibleNodes) == 0 {
            <b>break</b>
        }
        <b>if</b> !extender.IsInterested(pod) {
            <b>continue</b>
        }

        <i>// Status of failed nodes in failedAndUnresolvableMap will be added to &lt;statuses&gt;,</i>
        <i>// so that the scheduler framework can respect the UnschedulableAndUnresolvable status for</i>
        <i>// particular nodes, and this may eventually improve preemption efficiency.</i>
        <i>// Note: use UnschedulableAndUnresolvable status to indicate that the node is unresolvable</i>
        <i>// for the pod, e.g. failed to pass NodeAffinity or NodeSelector.</i>
        feasibleList, failedMap, failedAndUnresolvableMap, err := extender.Filter(pod, feasibleNodes)
        <b>if</b> err != nil {
            <b>if</b> extender.IsIgnorable() {
                logger.Info(<s>"Skipping extender as it returned error and has ignorable flag set"</s>, <s>"exte</s>
                <b>continue</b>
            }
            <b>return</b> nil, err
        }

        <b>for</b> failedNodeName, failedMsg := <b>range</b> failedAndUnresolvableMap {
            statuses.Set(failedNodeName, framework.NewStatus(framework.UnschedulableAndUnresolvable, f
        }

        <b>for</b> failedNodeName, failedMsg := <b>range</b> failedMap {
            <b>if</b> _, found := failedAndUnresolvableMap[failedNodeName]; found {
                <i>// failedAndUnresolvableMap takes precedence over failedMap</i>
                <i>// note that this only happens if the extender returns the node in both maps</i>
                <b>continue</b>
            }</pre>
<div class="abs" style="left:947px;top:0;width:14px;height:861px;border-left:1px solid #e4e4e4"></div>
<div class="abs" style="left:947px;top:343px;width:14px;height:32.5px;background:#c1c1c1"></div>
<div class="abs" style="left:947px;top:358px;width:14px;height:2px;background:#3a3a3a"></div>
<div class="abs" style="left:916px;top:841px;width:42px;height:17px;background:#20202a;color:#c8c8c8;font-size:10.5px;line-height:19px;overflow:hidden;padding-left:2.3px;box-shadow:0 0 0 .6px #bbb">normal</div>
</div>
</div>
</body></html>
